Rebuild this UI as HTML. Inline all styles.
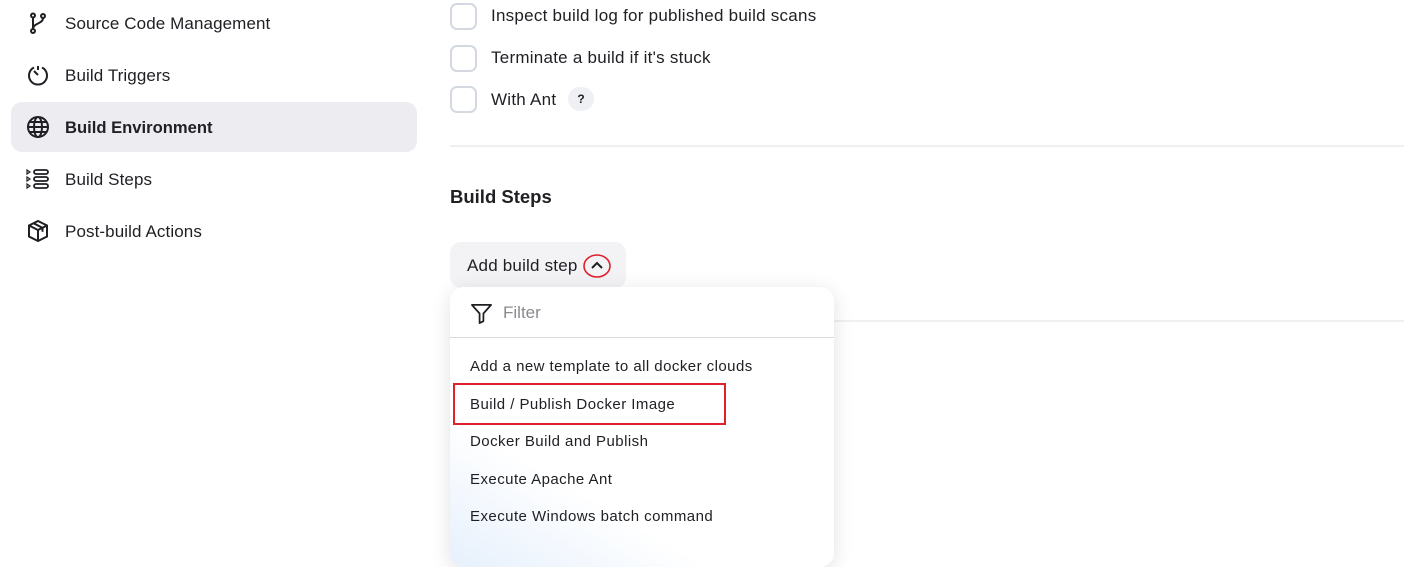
<!DOCTYPE html>
<html><head><style>
*{margin:0;padding:0;box-sizing:border-box}
body{width:1404px;height:544px;overflow:hidden;background:#fff;font-family:"Liberation Sans",sans-serif;color:#1f1f24;position:relative}
.a{position:absolute}
.nav{position:absolute;left:65px;font-size:17px;line-height:20px;letter-spacing:0.1px}
.ic{position:absolute;left:26px;width:24px;height:24px}
.cb{position:absolute;left:450px;width:27px;height:27px;border:2px solid #d4d8e0;border-radius:7px}
.lb{position:absolute;left:491px;font-size:17px;line-height:20px;letter-spacing:0.25px}
.it{position:absolute;left:20px;font-size:15px;line-height:18px;letter-spacing:0.45px}
</style></head><body>
<div class="a" style="left:11px;top:102px;width:406px;height:50px;background:#ececf1;border-radius:11px"></div>
<svg class="ic" style="top:11px" viewBox="0 0 24 24" fill="none" stroke="#1f1f24" stroke-width="2"><circle cx="7" cy="4.5" r="2"/><circle cx="7" cy="20" r="2"/><circle cx="17" cy="5" r="2"/><path d="M7 6.5v11.5M17 7c0 6-10 5-10 11"/></svg>
<div class="nav" style="top:14px">Source Code Management</div>
<svg class="ic" style="top:63px" viewBox="0 0 24 24" fill="none" stroke="#1f1f24" stroke-width="2"><path d="M8 4.5A9 9 0 1 0 16 4.5"/><path d="M12 3v4M12 12l-4-4"/></svg>
<div class="nav" style="top:66px">Build Triggers</div>
<svg class="ic" style="top:115px" viewBox="0 0 24 24" fill="none" stroke="#1f1f24" stroke-width="2"><circle cx="12" cy="12" r="10"/><ellipse cx="12" cy="12" rx="4" ry="10"/><path d="M2 12h20M4 7h16M4 17h16"/></svg>
<div class="nav" style="top:118px;font-weight:bold;font-size:16.6px;letter-spacing:0">Build Environment</div>
<svg class="ic" style="top:167px" viewBox="0 0 24 24" fill="none" stroke="#1f1f24" stroke-width="1.8"><path d="M1 3l3 2-3 2zM1 10l3 2-3 2zM1 17l3 2-3 2z" stroke-width="1.2"/><rect x="8" y="3" width="14" height="4" rx="2"/><rect x="8" y="10" width="14" height="4" rx="2"/><rect x="8" y="17" width="14" height="4" rx="2"/></svg>
<div class="nav" style="top:170px">Build Steps</div>
<svg class="ic" style="top:219px" viewBox="0 0 24 24" fill="none" stroke="#1f1f24" stroke-width="2"><path d="M12 2l9 4.5v11L12 22l-9-4.5v-11z"/><path d="M3 6.5L12 11l9-4.5M12 11v11M7.5 4.2l9 4.6v4"/></svg>
<div class="nav" style="top:222px">Post-build Actions</div>

<div class="cb" style="top:3px"></div><div class="lb" style="top:6px">Inspect build log for published build scans</div>
<div class="cb" style="top:45px"></div><div class="lb" style="top:48px">Terminate a build if it's stuck</div>
<div class="cb" style="top:86px"></div><div class="lb" style="top:90px">With Ant</div>
<div class="a" style="left:568px;top:87px;width:26px;height:24px;border-radius:12px;background:#eef0f3;font-size:12px;font-weight:bold;text-align:center;line-height:24px">?</div>
<div class="a" style="left:450px;top:145px;width:954px;height:2px;background:#f0f0f3"></div>
<div class="a" style="left:450px;top:186px;font-size:18.5px;font-weight:bold">Build Steps</div>
<div class="a" style="left:450px;top:242px;width:176px;height:46px;background:#f3f3f6;border-radius:11px"></div>
<div class="a" style="left:467px;top:256px;font-size:17px;letter-spacing:0.2px">Add build step</div>
<svg class="a" style="left:582px;top:253px" width="30" height="26" viewBox="0 0 30 26" fill="none"><ellipse cx="15" cy="13" rx="13" ry="11" stroke="#e0202a" stroke-width="1.6"/><path d="M10 15l5-5 5 5" stroke="#1f1f24" stroke-width="2"/></svg>
<div class="a" style="left:834px;top:320px;width:570px;height:2px;background:#f0f0f3"></div>
<div class="a" style="left:450px;top:287px;width:384px;height:280px;background:linear-gradient(30deg,#e6f0fc 0%,#fff 30%);border-radius:14px;box-shadow:0 4px 20px rgba(0,0,30,.12)">
<svg class="a" style="left:20px;top:15px" width="23" height="23" viewBox="0 0 24 24" fill="none" stroke="#1f1f24" stroke-width="1.8" stroke-linejoin="round"><path d="M2 3h20l-8 9v8l-4 2V12z"/></svg>
<div class="a" style="left:53px;top:16px;font-size:17px;color:#8a8a90">Filter</div>
<div class="a" style="left:0;top:50px;width:384px;height:1px;background:#d8d8de"></div>
<div class="it" style="top:71px">Add a new template to all docker clouds</div>
<div class="a" style="left:3px;top:96px;width:273px;height:42px;border:2px solid #e0202a"></div>
<div class="it" style="top:109px">Build / Publish Docker Image</div>
<div class="it" style="top:146px">Docker Build and Publish</div>
<div class="it" style="top:184px">Execute Apache Ant</div>
<div class="it" style="top:221px">Execute Windows batch command</div>
</div>
</body></html>
